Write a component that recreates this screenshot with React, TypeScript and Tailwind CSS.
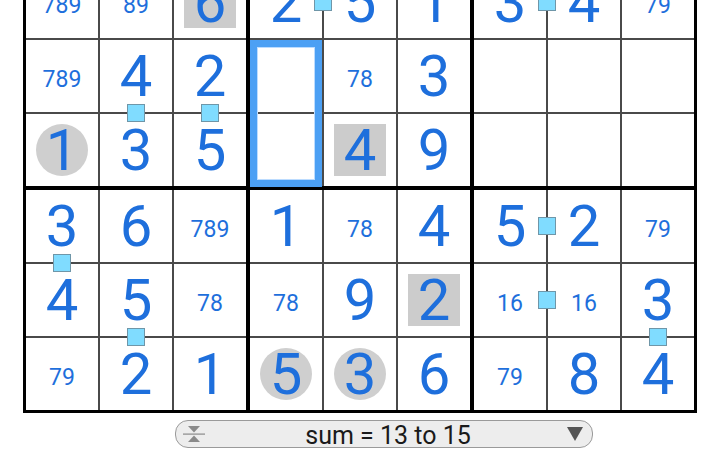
import React from "react";

type Cell = string;

const rows: Cell[][] = [
  ["789", "89", "6s", "2", "5", "1", "3", "4", "79"],
  ["789", "4", "2", "", "78", "3", "", "", ""],
  ["1c", "3", "5", "", "4s", "9", "", "", ""],
  ["3", "6", "789", "1", "78", "4", "5", "2", "79"],
  ["4", "5", "78", "78", "9", "2s", "16", "16", "3"],
  ["79", "2", "1", "5c", "3c", "6", "79", "8", "4"],
];

const markers: [number, number][] = [
  [288, 27],
  [512, 27],
  [101, 138],
  [175, 138],
  [512, 251],
  [27, 288],
  [512, 325],
  [101, 362],
  [623, 362],
];

function CellView({ v }: { v: Cell }) {
  const deco = v.endsWith("c") ? "c" : v.endsWith("s") ? "s" : "";
  const text = deco ? v.slice(0, -1) : v;
  const big = text.length === 1;
  const inner = big ? (
    <span className="text-[58px] leading-none text-[#1e6fdc]">{text}</span>
  ) : text ? (
    <span className="text-[23px] leading-none text-[#1e6fdc] pt-[6px]">{text}</span>
  ) : null;
  return (
    <div className="w-[72px] h-[72px] bg-white flex items-center justify-center">
      {deco === "c" ? (
        <div className="w-[52px] h-[52px] rounded-full bg-[#cfcfcf] flex items-center justify-center">
          {inner}
        </div>
      ) : deco === "s" ? (
        <div className="w-[52px] h-[52px] bg-[#cccccc] flex items-center justify-center">
          {inner}
        </div>
      ) : (
        inner
      )}
    </div>
  );
}

function Box({ r0, c0 }: { r0: number; c0: number }) {
  const cells: Cell[] = [];
  for (let r = r0; r < r0 + 3; r++) {
    for (let c = c0; c < c0 + 3; c++) cells.push(rows[r][c]);
  }
  return (
    <div className="grid grid-cols-[72px_72px_72px] gap-[2px] bg-[#4a4a4a]">
      {cells.map((v, i) => (
        <CellView key={i} v={v} />
      ))}
    </div>
  );
}

function Band({ r0 }: { r0: number }) {
  return (
    <div className="flex gap-[4px]">
      <Box r0={r0} c0={0} />
      <Box r0={r0} c0={3} />
      <Box r0={r0} c0={6} />
    </div>
  );
}

export default function App() {
  return (
    <div
      className="w-[720px] h-[450px] overflow-hidden bg-white"
      style={{ fontFamily: "Roboto, 'Noto Sans', sans-serif" }}
    >
      <div className="relative mt-[-37px] ml-[23px] w-fit border-[3px] border-black bg-black flex flex-col gap-[4px]">
        <Band r0={0} />
        <Band r0={3} />
        <div className="absolute left-[224px] top-[74px] w-[72px] h-[147px] border-[7px] border-[#4ca0f4] shadow-[inset_0_0_0_1px_#bcdcff]" />
        {markers.map(([l, t], i) => (
          <div
            key={i}
            className="absolute w-[18px] h-[18px] bg-[#80dcff] border border-[#6f96a8]"
            style={{ left: l, top: t }}
          />
        ))}
      </div>
      <div className="mt-[7px] ml-[175px] w-[418px] h-[28px] rounded-[13px] border border-[#9a9a9a] bg-[#ededed] flex items-center px-[6px]">
        <svg width="24" height="22" viewBox="0 0 24 22" className="shrink-0">
          <path d="M6 3 H18 L12 9.5 Z" fill="#8a8a8a" />
          <rect x="1" y="10.5" width="22" height="1.2" fill="#8a8a8a" />
          <path d="M6 19 H18 L12 12.5 Z" fill="#8a8a8a" />
        </svg>
        <div className="flex-1 text-center text-[25px] leading-none text-[#1a1a1a] pl-[4px] pt-[2px]">
          sum = 13 to 15
        </div>
        <svg width="18" height="16" viewBox="0 0 18 16" className="shrink-0 mr-[2px]">
          <path d="M1 1 H17 L9 15 Z" fill="#555555" />
        </svg>
      </div>
    </div>
  );
}
